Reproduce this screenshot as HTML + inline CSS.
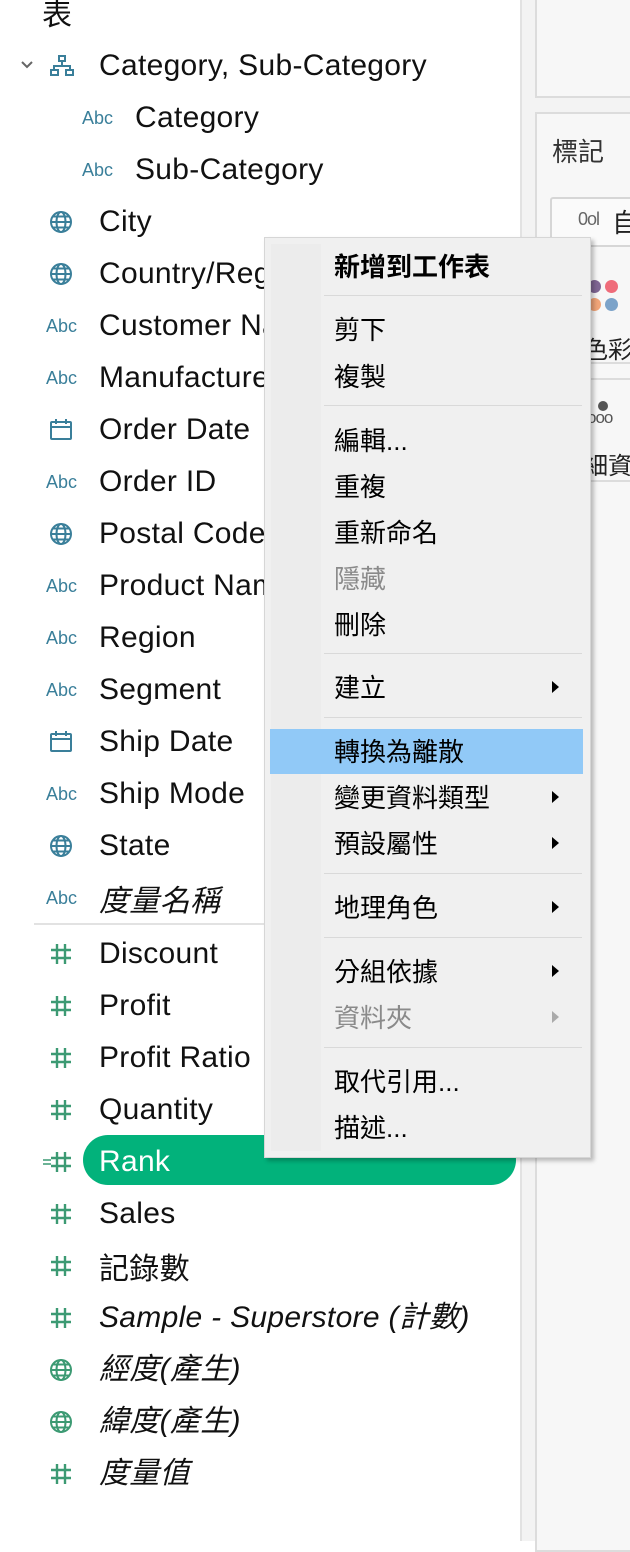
<!DOCTYPE html>
<html><head><meta charset="utf-8"><style>
*{margin:0;padding:0;box-sizing:border-box}
body{width:630px;height:1541px;position:relative;overflow:hidden;background:#fff;font-family:"Liberation Sans","Noto Sans CJK TC",sans-serif;color:#111}
.r{position:absolute;left:0;height:40px;line-height:40px;font-size:30px;white-space:nowrap;letter-spacing:0.3px}
.t{position:absolute;left:99px}
.i{font-style:italic}
.ic{position:absolute;left:48px;top:8px;width:26px;height:24px}
.abc{position:absolute;left:46px;font-size:18px;color:#3a7f9a;font-family:"Liberation Sans",sans-serif;letter-spacing:0}
.hs{position:absolute;left:50px;top:9px;width:22px;height:22px}
.m{position:absolute;left:69px;font-size:26px;line-height:34px;font-family:"Liberation Sans","Noto Sans CJK TC",sans-serif;color:#000;white-space:nowrap}
.sep{position:absolute;left:59px;width:258px;height:1px;background:#d9d9d9}
.ar{position:absolute;left:287px;width:0;height:0;border-left:7px solid #000;border-top:6px solid transparent;border-bottom:6px solid transparent}
#menu{position:absolute;left:264px;top:237px;width:327px;height:921px;background:#f0f0f0;border:1px solid #d6d6d6;box-shadow:3px 3px 4px rgba(0,0,0,.25)}
.gut{position:absolute;left:6px;top:6px;width:50px;height:907px;background:#ececec}
.nw{white-space:nowrap;position:absolute}
</style></head><body>
<svg width="0" height="0" style="position:absolute"><defs><g id="h"><path d="M7 1v20M15 1v20M1 7h20M1 15h20" stroke="#3c9a73" stroke-width="2.4" fill="none"/></g>
<g id="g"><circle cx="13" cy="12" r="10"/><ellipse cx="13" cy="12" rx="4.5" ry="10"/><path d="M3 12h20M5 6.5h16M5 17.5h16"/></g>
<g id="c"><rect x="3" y="4" width="20" height="17" rx="1"/><path d="M3 9h20M8 1v5M18 1v5"/></g></defs></svg>
<!-- right side -->
<div style="position:absolute;left:520px;top:0;width:110px;height:1541px;background:#f3f3f3"></div>
<div style="position:absolute;left:520px;top:0;width:2px;height:1541px;background:#e2e2e2"></div>
<div style="position:absolute;left:535px;top:-2px;width:100px;height:100px;background:#f7f7f7;border:2px solid #dcdcdc"></div>
<div style="position:absolute;left:535px;top:112px;width:100px;height:1440px;background:#f7f7f7;border:2px solid #dcdcdc"></div>
<div class="nw" style="left:552px;top:132px;font-size:26px;color:#333;font-family:'Noto Sans CJK TC',sans-serif">標記</div>
<div style="position:absolute;left:550px;top:197px;width:90px;height:50px;background:#fafafa;border:2px solid #d6d6d6;border-radius:3px"></div>
<div class="nw" style="left:578px;top:209px;font-size:18px;color:#666;letter-spacing:-1px">0ol</div>
<div class="nw" style="left:612px;top:203px;font-size:26px;color:#222;font-family:'Noto Sans CJK TC',sans-serif">自</div>
<div style="position:absolute;left:588px;top:280px;width:13px;height:13px;border-radius:50%;background:#7f6693"></div>
<div style="position:absolute;left:605px;top:280px;width:13px;height:13px;border-radius:50%;background:#ef6c7a"></div>
<div style="position:absolute;left:588px;top:298px;width:13px;height:13px;border-radius:50%;background:#f0a478"></div>
<div style="position:absolute;left:605px;top:298px;width:13px;height:13px;border-radius:50%;background:#7ca3c9"></div>
<div class="nw" style="left:584px;top:330px;font-size:24px;color:#222;font-family:'Noto Sans CJK TC',sans-serif">色彩</div>
<div style="position:absolute;left:535px;top:362px;width:100px;height:2px;background:#dcdcdc"></div>
<div style="position:absolute;left:535px;top:378px;width:100px;height:2px;background:#dcdcdc"></div>
<div style="position:absolute;left:598px;top:401px;width:10px;height:10px;border-radius:50%;background:#555"></div>
<div class="nw" style="left:587px;top:408px;font-size:17px;color:#555;letter-spacing:-1px">ooo</div>
<div class="nw" style="left:584px;top:446px;font-size:24px;color:#222;font-family:'Noto Sans CJK TC',sans-serif">細資</div>
<div style="position:absolute;left:535px;top:480px;width:100px;height:2px;background:#dcdcdc"></div>

<!-- left list -->
<div class="r" style="top:-8px;left:42px;font-family:'Noto Sans CJK TC',sans-serif">表</div>
<div class="r" style="top:46px"><svg style="position:absolute;left:20px;top:14px" width="14" height="10" viewBox="0 0 14 10"><path d="M2 2l5 5 5-5" stroke="#666" stroke-width="2" fill="none"/></svg>
<svg class="ic" viewBox="0 0 26 24" style="left:49px"><g fill="none" stroke="#3a7f9a" stroke-width="2"><rect x="10" y="2" width="6" height="5"/><rect x="2" y="16" width="7" height="5"/><rect x="17" y="16" width="7" height="5"/><path d="M13 7v5M5 16v-4h16v4"/></g></svg>
<span class="t">Category, Sub-Category</span></div>
<div class="r" style="top:98px"><span class="abc" style="left:82px">Abc</span><span class="t" style="left:135px">Category</span></div>
<div class="r" style="top:150px"><span class="abc" style="left:82px">Abc</span><span class="t" style="left:135px">Sub-Category</span></div>
<div class="r" style="top:202px"><svg class="ic" viewBox="0 0 26 24"><use href="#g" fill="none" stroke="#3a7f9a" stroke-width="2"/></svg><span class="t">City</span></div>
<div class="r" style="top:254px"><svg class="ic" viewBox="0 0 26 24"><use href="#g" fill="none" stroke="#3a7f9a" stroke-width="2"/></svg><span class="t">Country/Region</span></div>
<div class="r" style="top:306px"><span class="abc">Abc</span><span class="t">Customer Name</span></div>
<div class="r" style="top:358px"><span class="abc">Abc</span><span class="t">Manufacturer</span></div>
<div class="r" style="top:410px"><svg class="ic" viewBox="0 0 26 24"><use href="#c" fill="none" stroke="#3a7f9a" stroke-width="2"/></svg><span class="t">Order Date</span></div>
<div class="r" style="top:462px"><span class="abc">Abc</span><span class="t">Order ID</span></div>
<div class="r" style="top:514px"><svg class="ic" viewBox="0 0 26 24"><use href="#g" fill="none" stroke="#3a7f9a" stroke-width="2"/></svg><span class="t">Postal Code</span></div>
<div class="r" style="top:566px"><span class="abc">Abc</span><span class="t">Product Name</span></div>
<div class="r" style="top:618px"><span class="abc">Abc</span><span class="t">Region</span></div>
<div class="r" style="top:670px"><span class="abc">Abc</span><span class="t">Segment</span></div>
<div class="r" style="top:722px"><svg class="ic" viewBox="0 0 26 24"><use href="#c" fill="none" stroke="#3a7f9a" stroke-width="2"/></svg><span class="t">Ship Date</span></div>
<div class="r" style="top:774px"><span class="abc">Abc</span><span class="t">Ship Mode</span></div>
<div class="r" style="top:826px"><svg class="ic" viewBox="0 0 26 24"><use href="#g" fill="none" stroke="#3a7f9a" stroke-width="2"/></svg><span class="t">State</span></div>
<div class="r" style="top:878px"><span class="abc">Abc</span><span class="t i" style="font-family:'Noto Sans CJK TC',sans-serif">度量名稱</span></div>
<div style="position:absolute;left:34px;top:923px;width:230px;height:2px;background:#e2e2e2"></div>
<div class="r" style="top:934px"><svg class="hs" viewBox="0 0 22 22"><use href="#h"/></svg><span class="t">Discount</span></div>
<div class="r" style="top:986px"><svg class="hs" viewBox="0 0 22 22"><use href="#h"/></svg><span class="t">Profit</span></div>
<div class="r" style="top:1038px"><svg class="hs" viewBox="0 0 22 22"><use href="#h"/></svg><span class="t">Profit Ratio</span></div>
<div class="r" style="top:1090px"><svg class="hs" viewBox="0 0 22 22"><use href="#h"/></svg><span class="t">Quantity</span></div>
<div style="position:absolute;left:83px;top:1135px;width:433px;height:50px;border-radius:25px;background:#02b27b"></div>
<div class="r" style="top:1142px"><svg style="position:absolute;left:43px;top:17px" width="8" height="6" viewBox="0 0 8 6"><path d="M0 1h8M0 5h8" stroke="#3c9a73" stroke-width="1.6"/></svg><svg class="hs" viewBox="0 0 22 22"><use href="#h"/></svg><span class="t" style="color:#fff">Rank</span></div>
<div class="r" style="top:1194px"><svg class="hs" viewBox="0 0 22 22"><use href="#h"/></svg><span class="t">Sales</span></div>
<div class="r" style="top:1246px"><svg class="hs" viewBox="0 0 22 22"><use href="#h"/></svg><span class="t" style="font-family:'Noto Sans CJK TC',sans-serif">記錄數</span></div>
<div class="r" style="top:1298px"><svg class="hs" viewBox="0 0 22 22"><use href="#h"/></svg><span class="t i">Sample - Superstore (計數)</span></div>
<div class="r" style="top:1350px"><svg class="ic" viewBox="0 0 26 24"><use href="#g" fill="none" stroke="#3c9a73" stroke-width="2"/></svg><span class="t i">經度(產生)</span></div>
<div class="r" style="top:1402px"><svg class="ic" viewBox="0 0 26 24"><use href="#g" fill="none" stroke="#3c9a73" stroke-width="2"/></svg><span class="t i">緯度(產生)</span></div>
<div class="r" style="top:1454px"><svg class="hs" viewBox="0 0 22 22"><use href="#h"/></svg><span class="t i">度量值</span></div>

<!-- menu -->
<div id="menu">
<div class="gut"></div>
<div style="position:absolute;left:5px;top:491px;width:313px;height:45px;background:#91c9f7"></div>
<div class="m" style="top:12px;font-weight:bold">新增到工作表</div>
<div class="sep" style="top:57px"></div>
<div class="m" style="top:75px">剪下</div>
<div class="m" style="top:122px">複製</div>
<div class="sep" style="top:167px"></div>
<div class="m" style="top:186px">編輯...</div>
<div class="m" style="top:232px">重複</div>
<div class="m" style="top:278px">重新命名</div>
<div class="m" style="top:324px;color:#8a8a8a">隱藏</div>
<div class="m" style="top:370px">刪除</div>
<div class="sep" style="top:415px"></div>
<div class="m" style="top:433px">建立</div><div class="ar" style="top:443px"></div>
<div class="sep" style="top:479px"></div>
<div class="m" style="top:497px">轉換為離散</div>
<div class="m" style="top:543px">變更資料類型</div><div class="ar" style="top:553px"></div>
<div class="m" style="top:589px">預設屬性</div><div class="ar" style="top:599px"></div>
<div class="sep" style="top:635px"></div>
<div class="m" style="top:653px">地理角色</div><div class="ar" style="top:663px"></div>
<div class="sep" style="top:699px"></div>
<div class="m" style="top:717px">分組依據</div><div class="ar" style="top:727px"></div>
<div class="m" style="top:763px;color:#8a8a8a">資料夾</div><div class="ar" style="top:773px;border-left-color:#aaa"></div>
<div class="sep" style="top:809px"></div>
<div class="m" style="top:827px">取代引用...</div>
<div class="m" style="top:873px">描述...</div>
</div>
</body></html>
